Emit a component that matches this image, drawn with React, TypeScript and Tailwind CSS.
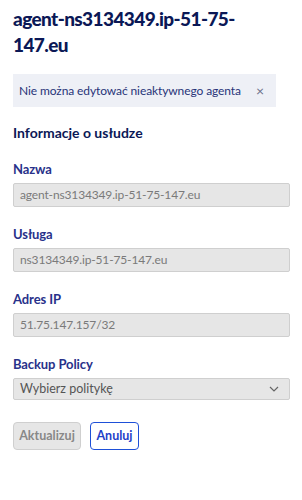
import React from "react";

const font = { fontFamily: "Lato, 'Noto Sans', sans-serif" };

function Field({ label, value }: { label: string; value: string }) {
  return (
    <div className="flex flex-col">
      <label className="text-[13px] font-bold text-[#28318a] leading-[18px] mb-[5px] tracking-[-0.1px]">{label}</label>
      <div className="h-[24px] w-full border border-[#cfcfcf] bg-[#e6e6e6] rounded-[2px] px-[6px] flex items-center text-[12px] tracking-[-0.15px] text-[#7a7a7a]">
        {value}
      </div>
    </div>
  );
}

export default function App() {
  return (
    <div className="w-[302px] h-[500px] bg-white px-[13px] pt-[6px]" style={font}>
      <h1 className="text-[19px] font-black leading-[26px] text-[#0b1856] w-[240px] tracking-[-0.6px]">
        agent-ns3134349.ip-51-75-147.eu
      </h1>
      <div className="mt-[16px] w-[263px] h-[33px] bg-[#eef0f6] flex items-center pl-[6px] pr-[12px] justify-between">
        <span className="text-[12px] text-[#283479] tracking-[-0.1px]">Nie można edytować nieaktywnego agenta</span>
        <span className="text-[14px] text-[#6b7089] leading-none">×</span>
      </div>
      <h2 className="mt-[16px] text-[14px] font-bold text-[#0b1856] leading-[20px]">Informacje o usłudze</h2>
      <div className="mt-[17px] flex flex-col gap-[18px] w-[277px]">
        <Field label="Nazwa" value="agent-ns3134349.ip-51-75-147.eu" />
        <Field label="Usługa" value="ns3134349.ip-51-75-147.eu" />
        <Field label="Adres IP" value="51.75.147.157/32" />
        <div className="flex flex-col">
          <label className="text-[13px] font-bold text-[#28318a] leading-[18px] mb-[5px] tracking-[-0.1px]">Backup Policy</label>
          <div className="h-[22px] w-full border border-[#cfcfcf] bg-[#e6e6e6] rounded-[2px] pl-[6px] pr-[10px] flex items-center justify-between text-[12.5px] text-[#555]">
            <span>Wybierz politykę</span>
            <svg width="10" height="6" viewBox="0 0 10 6" fill="none">
              <path d="M1 1l4 4 4-4" stroke="#666" strokeWidth="1.2" />
            </svg>
          </div>
        </div>
      </div>
      <div className="mt-[22px] flex gap-[9px]">
        <button className="h-[28px] w-[68px] border border-[#cfcfcf] bg-[#e6e6e6] rounded-[4px] text-[12.5px] font-bold text-[#888]">
          Aktualizuj
        </button>
        <button className="h-[28px] w-[49px] border border-[#1e50d8] bg-white rounded-[4px] text-[12.5px] font-bold text-[#1e40c8]">
          Anuluj
        </button>
      </div>
    </div>
  );
}
